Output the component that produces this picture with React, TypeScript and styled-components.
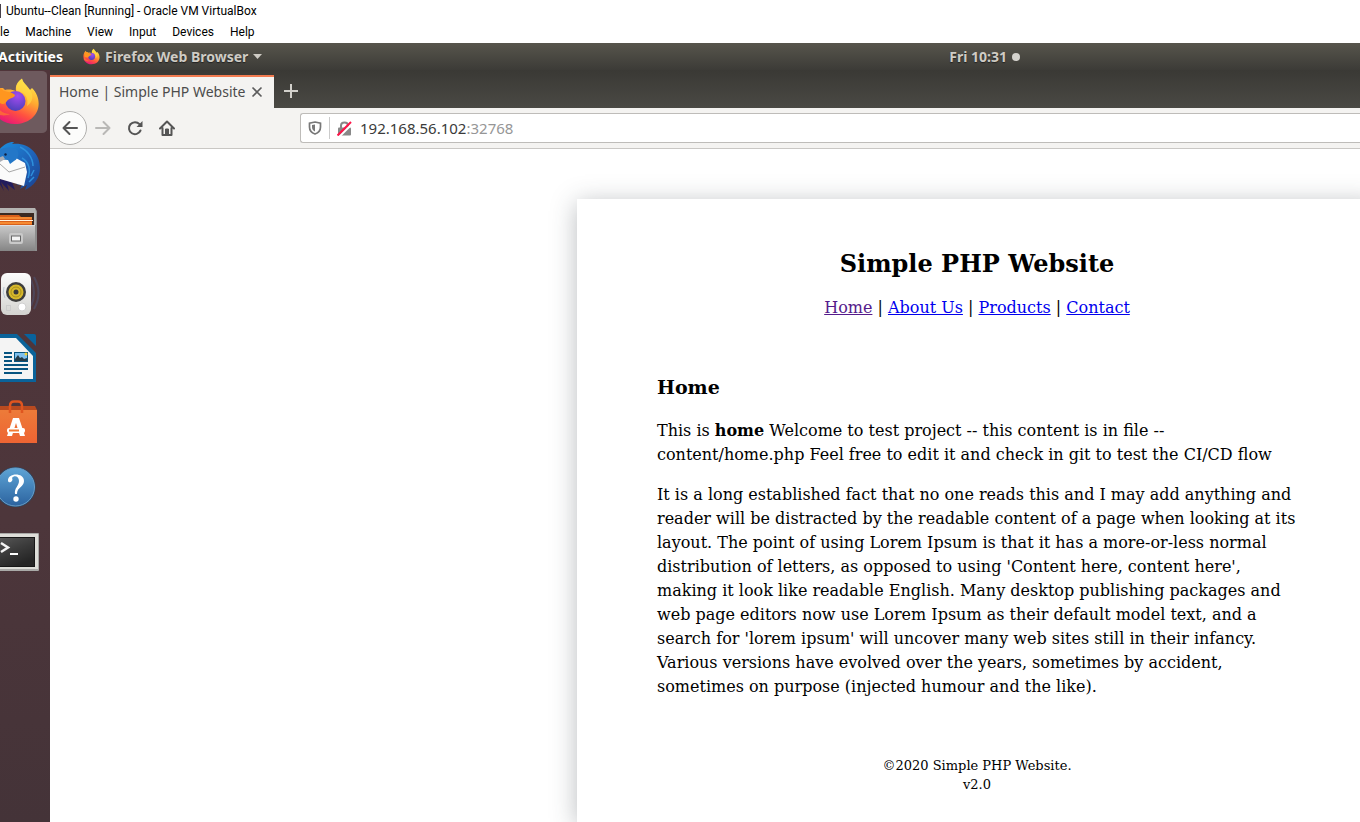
import React from "react";
import styled, { createGlobalStyle } from "styled-components";

const Global = createGlobalStyle`
  * { box-sizing: border-box; }
  body { margin: 0; background: #fff; }
  button { font: inherit; color: inherit; border: 0; padding: 0; background: none; }
  svg { display: block; flex: none; }
`;

const Screen = styled.div`
  display: flex;
  flex-direction: column;
  min-height: 100vh;
  overflow: hidden;
  font-family: "Noto Sans", sans-serif;
`;

const TitleBar = styled.header`
  display: flex;
  align-items: center;
  gap: 5px;
  height: 22px;
  font: 12px/22px Roboto, sans-serif;
  color: #000;
`;

const AppMark = styled.span`
  width: 1px;
  height: 14px;
  background: #46404a;
`;

const MenuBar = styled.nav`
  display: flex;
  gap: 16px;
  height: 21px;
  font: 12px/21px Roboto, sans-serif;
  color: #000;
`;

const SystemBar = styled.div`
  display: flex;
  align-items: center;
  justify-content: space-between;
  height: 27px;
  padding-right: 25%;
  background: linear-gradient(#57554c, #3c3b37);
  color: #dfdbd2;
  font-size: 14px;
  font-weight: 700;
  line-height: 27px;
  white-space: nowrap;
`;

const SystemGroup = styled.div`
  display: flex;
  align-items: center;
  gap: 20px;
  margin-left: -2px;
`;

const SystemButton = styled.button<{ $bright?: boolean }>`
  display: flex;
  align-items: center;
  gap: 5px;
  color: ${(p) => (p.$bright ? "#fff" : "#cfccc5")};
  text-shadow: 0 1px 1px #222;
`;

const Dot = styled.span`
  width: 8px;
  height: 8px;
  border-radius: 50%;
  background: #d4d2cd;
`;

const Desktop = styled.div`
  display: flex;
  flex: 1;
`;

const Dock = styled.aside`
  flex: none;
  width: 50px;
  background: linear-gradient(#50353a, #4d363b 60%, #443338);
`;

const DockButton = styled.button<{ $active?: boolean }>`
  display: block;
  width: 47px;
  height: 64px;
  padding: 1px 0;
  background: ${(p) => (p.$active ? "#6e5a5e" : "transparent")};
  background-clip: content-box;
  border-radius: 0 5px 5px 0;
`;

const Browser = styled.main`
  display: flex;
  flex: 1;
  flex-direction: column;
  min-width: 0;
`;

const TabStrip = styled.div`
  display: flex;
  align-items: flex-end;
  height: 38px;
  background: linear-gradient(#3a3935, #4a4944);
`;

const Tab = styled.div`
  display: flex;
  align-items: center;
  justify-content: space-between;
  width: 224px;
  height: 33px;
  padding: 0 11px 2px 9px;
  border-top: 2px solid #f27b50;
  background: #f4f3f1;
  color: #4c4c4c;
  font-size: 14px;
  white-space: nowrap;
`;

const NewTab = styled.button`
  display: grid;
  place-items: center;
  width: 34px;
  height: 34px;
`;

const Toolbar = styled.div`
  display: flex;
  align-items: center;
  height: 41px;
  padding-left: 3px;
  background: #f4f3f1;
  border-bottom: 1px solid #c9c7c4;
`;

const Tools = styled.div`
  display: flex;
  align-items: center;
  width: 247px;
`;

const Tool = styled.button<{ $round?: boolean }>`
  display: grid;
  place-items: center;
  width: ${(p) => (p.$round ? 34 : 32)}px;
  height: 34px;
  border: ${(p) => (p.$round ? "1px solid #b0afad" : "0")};
  border-radius: 50%;
  background: ${(p) => (p.$round ? "#fcfcfb" : "transparent")};
`;

const AddressBar = styled.div`
  display: flex;
  align-items: center;
  flex: 1;
  height: 30px;
  padding-left: 7px;
  border: 1px solid #bebcb9;
  border-right: 0;
  border-radius: 3px 0 0 3px;
  background: #fff;
  color: #3b3b3b;
  font-size: 15px;
`;

const Separator = styled.span`
  width: 1px;
  height: 22px;
  margin: 0 7px;
  background: #cbcbcb;
`;

const Address = styled.div`
  padding-left: 8px;
  line-height: 20px;
  span { color: #969696; }
`;

const Viewport = styled.div`
  display: flex;
  flex: 1;
  overflow: hidden;
  padding: 50px 0 0 calc(50% - 128px);
  background: #fff;
`;

const Card = styled.article`
  flex: none;
  width: 800px;
  padding: 47px 80px 24px;
  background: #fff;
  box-shadow: 0 4px 24px rgba(50, 58, 68, 0.34);
  color: #000;
  font: 16px/24px "DejaVu Serif", serif;
`;

const SiteTitle = styled.h1`
  margin: 0 0 14px;
  font-size: 24px;
  line-height: 36px;
  text-align: center;
`;

const SiteNav = styled.nav`
  text-align: center;
`;

const SiteLink = styled.a<{ $visited?: boolean }>`
  color: ${(p) => (p.$visited ? "#551a8b" : "#0000ee")};
`;

const Heading = styled.h2`
  margin: 53px 0 18px;
  font-size: 19px;
  line-height: 28px;
`;

const Text = styled.p`
  margin: 0 0 16px;
`;

const Footer = styled.footer`
  margin-top: 57px;
  font-size: 13px;
  line-height: 19px;
  text-align: center;
`;

const FlameGradients = () => (
  <defs>
    <linearGradient id="flame" x1="0.8" y1="0" x2="0.3" y2="1">
      <stop offset="0" stopColor="#fff44f" />
      <stop offset="0.4" stopColor="#ffa930" />
      <stop offset="0.7" stopColor="#ff5040" />
      <stop offset="1" stopColor="#e5127d" />
    </linearGradient>
    <radialGradient id="globe" cx="0.6" cy="0.25" r="0.8">
      <stop offset="0" stopColor="#a44cf0" />
      <stop offset="1" stopColor="#4a3fb8" />
    </radialGradient>
  </defs>
);

const FirefoxArt = () => (
  <>
    <FlameGradients />
    <path
      d="M-9 31C-9 24-6 18-2 14L0 18 3 18 5 20C9 19 13 20 16 21C15 16 18 11 22 8.500C23 13 27 15 30 20L32 18C37 23 39 29 38.600 35C38 46 28 54 15 54C1 54-9 44-9 31Z"
      fill="url(#flame)"
    />
    <path d="M22 9C17 12 15 16 17 21C25 22 29 28 27 36C33 32 34 25 30 20C26 16 23 13 22 9Z" fill="#ffe047" opacity="0.6" />
    <circle cx="15.500" cy="31" r="10" fill="url(#globe)" />
    <path d="M-6 20L0 18 4 21C8 22 12 22 15 25C15 28 9 28 7 31C5 34 3 35 0 33L-6 33Z" fill="#ff961f" />
    <path d="M-6 32C-2 40 3 44 10 44C4 47-4 45-8 40Z" fill="#ff7a2c" opacity="0.7" />
  </>
);

const ThunderbirdArt = () => (
  <>
    <defs>
      <linearGradient id="bird" x1="0" y1="0" x2="1" y2="1">
        <stop offset="0" stopColor="#1b91e0" />
        <stop offset="0.55" stopColor="#1f62b8" />
        <stop offset="1" stopColor="#1b3f8c" />
      </linearGradient>
    </defs>
    <path d="M-4 44L4 57 1 48 9 57 7 50 15 56 12 48Z" fill="#221c5c" />
    <path d="M-4 20C0 13 7 8 13 8C15 8 13 9 12 10C28 8 40 19 40 34C40 44 34 52 25 56L27 51 20 55 23 49 17 51 25 40Z" fill="url(#bird)" />
    <path d="M-2 25L8 26 14 23 25 29 27 38 24 52 0 45Z" fill="#fbfbfb" />
    <path d="M0 30L9 38 25 33" fill="none" stroke="#a8a8a8" />
    <path d="M-4 20C0 13 9 12 16 15C20 18 19 24 14 27L10 30 8 26C5 23 2 22-1 27Z" fill="#2377c8" />
    <path d="M-2 24L3 22 5 25 0 28Z" fill="#a9adb5" />
    <path d="M20 13C27 16 33 24 33 32M31 42L34 36M29 48L34 43M22 24C29 28 31 36 28 44" fill="none" stroke="#2e8fdb" strokeWidth="1.500" />
    <circle cx="5.500" cy="20.500" r="1.200" fill="#102040" />
  </>
);

const FilesArt = () => (
  <>
    <defs>
      <linearGradient id="steel" x2="0" y2="1">
        <stop stopColor="#cacaca" />
        <stop offset="1" stopColor="#858585" />
      </linearGradient>
    </defs>
    <path d="M0 10H35L37 13V53H0Z" fill="#8d8d8d" />
    <path d="M0 10H35L36 14V27H0Z" fill="#b4b4b2" />
    <path d="M0 15H34V27H0Z" fill="#3b2a22" />
    <path d="M0 17H19L21 19H32V27H0Z" fill="#d9601a" />
    <path d="M0 20H32M0 25H32" stroke="#f58a32" strokeWidth="2" />
    <path d="M0 22.500H33" stroke="#fff3df" />
    <path d="M0 27H35V53H0Z" fill="url(#steel)" />
    <path d="M0 27.500H35" stroke="#dedede" />
    <rect x="9" y="35" width="14" height="11" rx="2" fill="#c9c9c9" />
    <rect x="11.500" y="38" width="9" height="5" fill="#f4f4f4" stroke="#686868" />
  </>
);

const SpeakerArt = () => (
  <>
    <defs>
      <linearGradient id="box" x2="0" y2="1">
        <stop stopColor="#fcfcfc" />
        <stop offset="1" stopColor="#d3d3d0" />
      </linearGradient>
    </defs>
    <path d="M31 18Q37 31 31 44M34 15Q43 31 34 47" fill="none" stroke="#4d5f88" strokeWidth="2" opacity="0.4" />
    <rect x="1" y="11" width="30" height="42" rx="6" fill="url(#box)" />
    <circle cx="16" cy="30" r="10" fill="#3d3d3d" />
    <circle cx="16" cy="30" r="7.500" fill="#d7b92c" />
    <circle cx="16" cy="30" r="5" fill="none" stroke="#a98f1d" />
    <circle cx="16" cy="30" r="2.500" fill="#3a3a3a" />
    <path d="M4 25Q2 31 5 36" stroke="#b9c7d5" fill="none" />
    <rect x="6.500" y="43.500" width="4" height="5" fill="none" stroke="#ccc" />
    <circle cx="22" cy="45" r="4" fill="#fff" stroke="#d0d0d0" />
  </>
);

const WriterArt = () => (
  <>
    <path d="M0 8H17L36 27V56H0Z" fill="#0a639a" />
    <path d="M24 8H34Q36 8 36 10V20Z" fill="#08639d" />
    <path d="M0 12H16L33 30V53H0Z" fill="#f4f4f4" />
    <path d="M4 27H12M4 31H12M4 35H12M4 39H28M4 43H28M4 47H22" stroke="#075480" strokeWidth="2" />
    <path d="M14 26H28V36H14Z" fill="#7fc0ee" />
    <path d="M15 36V33L18 29 20 32 22 31 24 33 27 32V36Z" fill="#263b48" />
    <path d="M14 26.500H28M14 35.500H28M14.500 26V36M27.500 26V36" stroke="#075480" />
    <circle cx="26" cy="28" r="1.500" fill="#f2d034" />
  </>
);

const SoftwareArt = () => (
  <>
    <defs>
      <linearGradient id="bag" x2="0" y2="1">
        <stop stopColor="#ed7b39" />
        <stop offset="1" stopColor="#ee6433" />
      </linearGradient>
    </defs>
    <path d="M0 16H35L37 20H0Z" fill="#b84a20" />
    <path d="M0 20H37V53H0Z" fill="url(#bag)" />
    <path d="M10 23V16Q10 11.500 14 11.500H18Q22 11.500 22 16V23" fill="none" stroke="#e0551f" strokeWidth="2.500" />
    <path d="M13 28H19L25 46H20L16 33 12 46H7Z" fill="#fff" />
    <rect x="7" y="38" width="18" height="5" rx="2" fill="#fff" />
    <path d="M9 40.500H19" stroke="#f17a35" strokeWidth="2" />
  </>
);

const HelpArt = () => (
  <>
    <defs>
      <linearGradient id="help" x2="0" y2="1">
        <stop stopColor="#5da4d6" />
        <stop offset="1" stopColor="#2c639f" />
      </linearGradient>
    </defs>
    <circle cx="15.500" cy="33" r="20" fill="#264b6c" />
    <circle cx="15.500" cy="33" r="19" fill="url(#help)" stroke="#6a9dc7" />
    <path d="M8 27C7 19 24 18 24 27C24 33 17 33 17 40H15C14 34 19 32 19 27C19 22 14 21 12 24C14 27 9 30 8 27Z" fill="#fff" />
    <circle cx="16" cy="45" r="2.700" fill="#fff" />
  </>
);

const TerminalArt = () => (
  <>
    <defs>
      <linearGradient id="tty" x1="0" y1="0" x2="0.5" y2="1">
        <stop stopColor="#555" />
        <stop offset="0.5" stopColor="#3b3b3b" />
        <stop offset="1" stopColor="#252525" />
      </linearGradient>
    </defs>
    <rect x="-4" y="15" width="43" height="38" rx="1" fill="#a9a9a7" />
    <path d="M0 16H38V51H0Z" fill="#deded9" />
    <path d="M0 19H35V49H0Z" fill="#171717" />
    <path d="M0 20H34V48H0Z" fill="url(#tty)" />
    <path d="M1 25L8 29.500 1 34" fill="none" stroke="#f4f4f4" strokeWidth="2.500" />
    <path d="M10 36H18" stroke="#fff" strokeWidth="2" />
  </>
);

const dockItems = [
  { name: "Firefox", Art: FirefoxArt },
  { name: "Thunderbird", Art: ThunderbirdArt },
  { name: "Files", Art: FilesArt },
  { name: "Rhythmbox", Art: SpeakerArt },
  { name: "Writer", Art: WriterArt },
  { name: "Software", Art: SoftwareArt },
  { name: "Help", Art: HelpArt },
  { name: "Terminal", Art: TerminalArt },
];

const menus = ["le", "Machine", "View", "Input", "Devices", "Help"];

export default function App() {
  return (
    <Screen>
      <Global />
      <TitleBar>
        <AppMark />
        <span>Ubuntu--Clean [Running] - Oracle VM VirtualBox</span>
      </TitleBar>
      <MenuBar>
        {menus.map((m) => (
          <button key={m}>{m}</button>
        ))}
      </MenuBar>
      <SystemBar>
        <SystemGroup>
          <SystemButton $bright>Activities</SystemButton>
          <SystemButton>
            <svg width="17" height="17" viewBox="-10 7 50 48">
              <FirefoxArt />
            </svg>
            Firefox Web Browser
            <svg width="9" height="5" viewBox="0 0 9 5">
              <path d="M0 0H9L4.500 5Z" fill="#cfccc5" />
            </svg>
          </SystemButton>
        </SystemGroup>
        <SystemButton>
          Fri 10:31
          <Dot />
        </SystemButton>
      </SystemBar>
      <Desktop>
        <Dock>
          {dockItems.map(({ name, Art }, i) => (
            <DockButton key={name} aria-label={name} $active={i === 0}>
              <svg width="47" height="62" viewBox="0 1 47 62">
                <Art />
              </svg>
            </DockButton>
          ))}
        </Dock>
        <Browser>
          <TabStrip>
            <Tab>
              Home | Simple PHP Website
              <button aria-label="Close tab">
                <svg width="12" height="12" viewBox="0 0 12 12" stroke="#5c5c5c" strokeWidth="1.600">
                  <path d="M1.500 1.500L10.500 10.500M10.500 1.500L1.500 10.500" />
                </svg>
              </button>
            </Tab>
            <NewTab aria-label="New tab">
              <svg width="14" height="14" viewBox="0 0 14 14" stroke="#d2d0cb" strokeWidth="2">
                <path d="M7 0V14M0 7H14" />
              </svg>
            </NewTab>
          </TabStrip>
          <Toolbar>
            <Tools>
              <Tool $round aria-label="Back">
                <svg width="16" height="16" viewBox="0 0 16 16" fill="none" stroke="#555" strokeWidth="2" strokeLinecap="round" strokeLinejoin="round">
                  <path d="M15 8H1.500M7.500 2L1.500 8 7.500 14" />
                </svg>
              </Tool>
              <Tool aria-label="Forward">
                <svg width="16" height="16" viewBox="0 0 16 16" fill="none" stroke="#b9b8b6" strokeWidth="2" strokeLinecap="round" strokeLinejoin="round">
                  <path d="M1 8H14.500M8.500 2L14.500 8 8.500 14" />
                </svg>
              </Tool>
              <Tool aria-label="Reload">
                <svg width="16" height="16" viewBox="0 0 16 16" fill="none" stroke="#555" strokeWidth="2" strokeLinecap="round">
                  <path d="M13.500 10.500A6 6 0 1 1 12.500 4.200L13.500 5.500" />
                  <path d="M15.500 1V7H9.500Z" fill="#555" stroke="none" />
                </svg>
              </Tool>
              <Tool aria-label="Home page">
                <svg width="16" height="16" viewBox="0 0 16 16" fill="none" stroke="#555" strokeWidth="2" strokeLinecap="round" strokeLinejoin="round">
                  <path d="M1 8.500L8 1.500 15 8.500M3.500 8V15H12.500V8" />
                  <path d="M6.500 14.500V9H9.500V14.500Z" fill="#555" strokeWidth="1" />
                </svg>
              </Tool>
            </Tools>
            <AddressBar>
              <svg width="14" height="14" viewBox="0 0 14 14">
                <path d="M7 1L12.500 2.200V6C12.500 9.500 10 12 7 13C4 12 1.500 9.500 1.500 6V2.200Z" fill="none" stroke="#787878" strokeWidth="1.700" />
                <path d="M7 3.500V10.500C5 9.500 4 8 4 6V4Z" fill="#787878" />
              </svg>
              <Separator />
              <svg width="15" height="15" viewBox="0 0 15 15">
                <path d="M4 7V4.500C4 0.500 11 0.500 11 4.500V7" fill="none" stroke="#888" strokeWidth="2" />
                <rect x="1" y="6.500" width="13" height="8" rx="1" fill="#888" />
                <path d="M2.500 15.500L15.500 2.500" stroke="#fff" strokeWidth="2" />
                <path d="M0.500 14.500L14 1" stroke="#ff1548" strokeWidth="2" />
              </svg>
              <Address>
                192.168.56.102<span>:32768</span>
              </Address>
            </AddressBar>
          </Toolbar>
          <Viewport>
            <Card>
              <SiteTitle>Simple PHP Website</SiteTitle>
              <SiteNav>
                <SiteLink href="#home" $visited>Home</SiteLink> | <SiteLink href="#about">About Us</SiteLink> |{" "}
                <SiteLink href="#products">Products</SiteLink> | <SiteLink href="#contact">Contact</SiteLink>
              </SiteNav>
              <Heading>Home</Heading>
              <Text>
                This is <b>home</b> Welcome to test project -- this content is in file -- content/home.php Feel free to edit it
                and check in git to test the CI/CD flow
              </Text>
              <Text>
                It is a long established fact that no one reads this and I may add anything and reader will be distracted by the
                readable content of a page when looking at its layout. The point of using Lorem Ipsum is that it has a
                more-or-less normal distribution of letters, as opposed to using 'Content here, content here', making it look
                like readable English. Many desktop publishing packages and web page editors now use Lorem Ipsum as their default
                model text, and a search for 'lorem ipsum' will uncover many web sites still in their infancy. Various versions
                have evolved over the years, sometimes by accident, sometimes on purpose (injected humour and the like).
              </Text>
              <Footer>
                ©2020 Simple PHP Website.
                <br />
                v2.0
              </Footer>
            </Card>
          </Viewport>
        </Browser>
      </Desktop>
    </Screen>
  );
}
